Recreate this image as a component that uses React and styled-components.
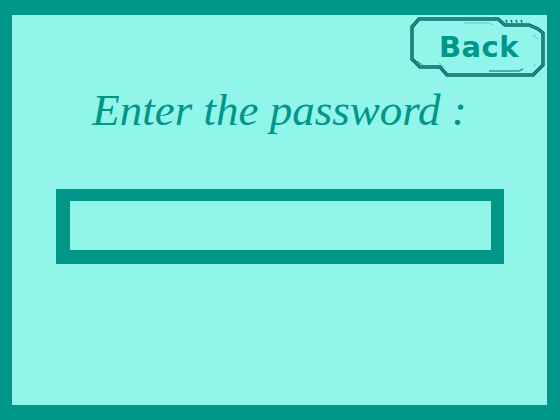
import React from "react";
import styled, { createGlobalStyle } from "styled-components";

const TEAL = "#009688";
const MINT = "#92f5ea";

const GlobalStyle = createGlobalStyle`
  html, body {
    margin: 0;
    padding: 0;
    background: ${MINT};
  }
  * {
    box-sizing: border-box;
  }
`;

const OUTLINE =
  "M3 11 L10 3 L89 3 L96 9 L120 9 L129 13 L134 17 L134 49 L124 59 L38 59 L31 51 L11 51 L3 43 Z";

const BackShape = () => (
  <Shape viewBox="0 0 138 63" width="138" height="63">
    <path d={OUTLINE} fill="none" stroke="#0b6a62" strokeWidth="3.5" />
    <path d={OUTLINE} fill="none" stroke="#2fa598" strokeWidth="1" />
    <path d="M55 7 L80 7 L84 9" stroke="#5cc9bd" strokeWidth="1" fill="none" />
    <path d="M80 55 L110 55 L114 53" stroke="#2f9c90" strokeWidth="1.5" fill="none" />
    <path d="M8 45 L14 49" stroke="#2f9c90" strokeWidth="1" fill="none" />
    <path d="M30 47 L35 51" stroke="#5cc9bd" strokeWidth="1" fill="none" />
    <path d="M124 19 L129 23" stroke="#5cc9bd" strokeWidth="1" fill="none" />
    <path d="M124 51 L127 48" stroke="#5cc9bd" strokeWidth="1" fill="none" />
    <g stroke="#0b6a62" strokeWidth="1.5">
      <path d="M97 4 L98 6.5" />
      <path d="M102 4 L103 6.5" />
      <path d="M107 4 L108 6.5" />
      <path d="M112 4 L113 6.5" />
    </g>
  </Shape>
);

const App = () => {
  return (
    <>
      <GlobalStyle />
      <Frame>
        <TopBar>
          <BackButton type="button">
            <BackShape />
            <BackLabel>Back</BackLabel>
          </BackButton>
        </TopBar>
        <Title>Enter the password :</Title>
        <PasswordInput type="password" aria-label="password" />
      </Frame>
    </>
  );
};

export default App;

const Frame = styled.div`
  width: 560px;
  height: 420px;
  display: flex;
  flex-direction: column;
  background: ${MINT};
  border-style: solid;
  border-color: ${TEAL};
  border-width: 15px 13px 15px 12px;
`;

const TopBar = styled.div`
  display: flex;
  justify-content: flex-end;
  padding: 1px 0 0 0;
`;

const BackButton = styled.button`
  position: relative;
  width: 138px;
  height: 63px;
  padding: 0;
  border: none;
  background: transparent;
  display: flex;
  align-items: center;
  justify-content: center;
  cursor: pointer;
`;

const Shape = styled.svg`
  position: absolute;
  left: 0;
  top: 0;
`;

const BackLabel = styled.span`
  position: relative;
  font-family: "DejaVu Sans", sans-serif;
  font-weight: bold;
  font-size: 29px;
  color: ${TEAL};
  margin: 0 0 2px 2px;
  letter-spacing: 0.5px;
`;

const Title = styled.h1`
  margin: 6px 0 0 0;
  font-family: "Liberation Serif", serif;
  font-style: italic;
  font-weight: normal;
  font-size: 45px;
  line-height: 50px;
  color: ${TEAL};
  text-align: center;
`;

const PasswordInput = styled.input`
  align-self: center;
  margin-top: 54px;
  width: 448px;
  height: 75px;
  background: transparent;
  border-style: solid;
  border-color: ${TEAL};
  border-width: 12px 13px 14px 14px;
  outline: none;
  color: ${TEAL};
  font-size: 28px;
  padding: 0 12px;
`;
